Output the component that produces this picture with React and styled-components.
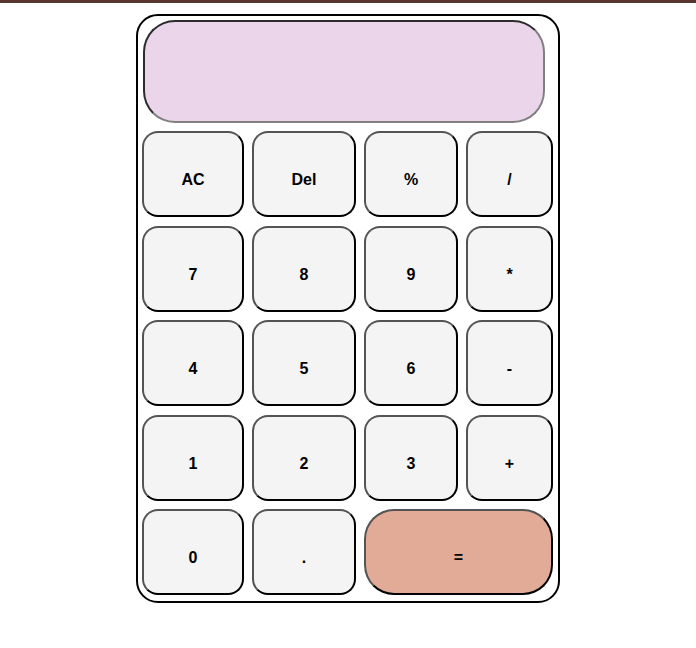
import React from 'react'
import styled, { createGlobalStyle } from 'styled-components'

const GlobalStyle = createGlobalStyle`
    body {
        margin: 0;
        background: #fff;
        font-family: 'Liberation Sans', Arial, sans-serif;
    }
`

const TopBar = styled.div`
    height: 3px;
    background: #5a3631;
`

const Page = styled.div`
    display: flex;
    justify-content: center;
    padding-top: 11px;
`

const Calculator = styled.div`
    box-sizing: border-box;
    width: 424px;
    border: 2px solid #000;
    border-radius: 22px;
    padding: 4px 5px 6px 4px;
    background: #fff;
`

const Screen = styled.div`
    box-sizing: border-box;
    width: 402px;
    height: 103px;
    margin: 0 0 8px 1px;
    background: #ebd5ea;
    border: 2px inset #808080;
    border-radius: 32px;
`

const Keys = styled.div`
    display: grid;
    grid-template-columns: 102px 104px 94px 87px;
    grid-auto-rows: 86px;
    column-gap: 8px;
    row-gap: 8.5px;
`

const Key = styled.button`
    box-sizing: border-box;
    grid-column: ${p => (p.$wide ? 'span 2' : 'auto')};
    display: flex;
    align-items: center;
    justify-content: center;
    padding: 12px 0 0;
    background: ${p => (p.$accent ? '#e2ab98' : '#f4f4f4')};
    border: 2px outset #000;
    border-radius: ${p => (p.$wide ? '30px' : '16px')};
    font-family: 'Liberation Sans', Arial, sans-serif;
    font-size: 16px;
    font-weight: bold;
    color: #000;
`

const keys = [
    'AC', 'Del', '%', '/',
    '7', '8', '9', '*',
    '4', '5', '6', '-',
    '1', '2', '3', '+',
    '0', '.',
]

export default function App() {
    return (
        <>
            <GlobalStyle />
            <TopBar />
            <Page>
                <Calculator>
                    <Screen />
                    <Keys>
                        {keys.map(k => (
                            <Key key={k}>{k}</Key>
                        ))}
                        <Key $wide $accent>=</Key>
                    </Keys>
                </Calculator>
            </Page>
        </>
    )
}
